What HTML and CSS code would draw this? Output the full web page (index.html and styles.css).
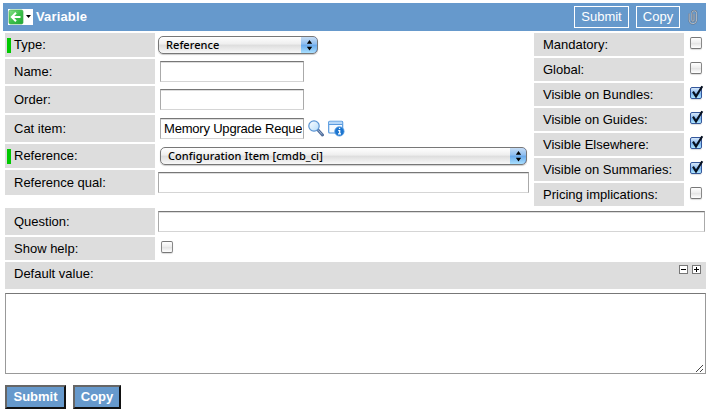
FILE: index.html
```html
<!DOCTYPE html>
<html lang="en">
<head>
<meta charset="utf-8">
<title>Variable</title>
<link rel="stylesheet" href="styles.css">
</head>
<body>
<svg class="defs" width="0" height="0">
  <defs>
    <linearGradient id="green" x2="1" y2="1"><stop stop-color="#8be28b"/><stop offset=".5" stop-color="#3cc04a"/><stop offset="1" stop-color="#1fa832"/></linearGradient>
    <linearGradient id="lens" x2="1" y2="1"><stop stop-color="#fff"/><stop offset="1" stop-color="#b5dcfa"/></linearGradient>
    <symbol id="tick" viewBox="0 0 16 16"><path d="M4 6.6 7 11.4 13.3 1.2" fill="none" stroke="#07101f" stroke-width="2.1"/></symbol>
  </defs>
</svg>
<header class="bar">
  <span class="back">
    <svg width="25" height="16" viewBox="0 0 25 16"><rect x="1" y="1" width="14" height="14" rx="1.5" fill="url(#green)" stroke="#3fae4a" stroke-width=".7"/><path d="M12.5 8H4M8 3.8 3.8 8 8 12.2" fill="none" stroke="#fff" stroke-width="2"/><path d="M18 6h5l-2.5 3z" fill="#000"/></svg>
  </span>
  <h1>Variable</h1>
  <button class="top submit">Submit</button>
  <button class="top copy">Copy</button>
  <svg class="clip" width="10" height="15" viewBox="0 0 10 15"><path d="M1.2 3.5v6.5a3.7 3.7 0 0 0 7.4 0V3.2a2.4 2.4 0 0 0-4.8 0v7a1 1 0 0 0 2.2 0V4" fill="none" stroke="#56677c" stroke-width="1.6"/><path d="M1.2 3.5v6.5a3.7 3.7 0 0 0 7.4 0V3.2a2.4 2.4 0 0 0-4.8 0v7a1 1 0 0 0 2.2 0V4" fill="none" stroke="#dce2e8" stroke-width=".7"/></svg>
</header>
<main>
  <div class="columns">
    <section class="fields">
      <div class="row h24"><label class="label required">Type:</label><div class="select short"><span>Reference</span><i><svg width="17" height="16" viewBox="0 0 17 16"><path d="M5.8 6.8h5.4L8.5 3zM5.8 9.7h5.4L8.5 13.5z"/></svg></i></div></div>
      <div class="row h25"><label class="label">Name:</label><div class="input small"></div></div>
      <div class="row h27"><label class="label">Order:</label><div class="input small"></div></div>
      <div class="row h27"><label class="label">Cat item:</label><div class="input small"><span>Memory Upgrade Reque</span></div>
        <svg class="lookup" width="16" height="17" viewBox="0 0 16 17"><path d="m10 10 4.5 5" stroke="#526f9c" stroke-width="3" stroke-linecap="round"/><path d="m10.4 10.4 3.6 4" stroke="#a4b9d8" stroke-width="1"/><circle cx="6" cy="6" r="5.2" fill="url(#lens)" stroke="#5b94d3" stroke-width="1.2"/></svg>
        <svg class="info" width="17" height="17" viewBox="0 0 17 17"><rect x=".7" y="1.2" width="14" height="11.8" rx="1" fill="#f5faff" stroke="#4a92dc" stroke-width="1.1"/><path d="M1.2 1.7h13v2.5h-13z" fill="#b6d7f8"/><path d="M1 4.5h13.5" stroke="#5a9ade"/><circle cx="11.4" cy="11.4" r="4.7" fill="#1c75cf" stroke="#5ba0e5" stroke-width=".8"/><path d="M10.2 10.6h1.5v3M10 13.9h3M10.9 8.4h1.3" fill="none" stroke="#fff" stroke-width="1.3"/></svg>
      </div>
      <div class="row h24"><label class="label required">Reference:</label><div class="select long"><span>Configuration Item [cmdb_ci]</span><i><svg width="17" height="16" viewBox="0 0 17 16"><path d="M5.8 6.8h5.4L8.5 3zM5.8 9.7h5.4L8.5 13.5z"/></svg></i></div></div>
      <div class="row h25"><label class="label">Reference qual:</label><div class="input medium"></div></div>
    </section>
    <section class="options">
      <div class="option"><label class="label">Mandatory:</label><span class="check"></span></div>
      <div class="option"><label class="label">Global:</label><span class="check"></span></div>
      <div class="option"><label class="label">Visible on Bundles:</label><span class="check on"><svg><use href="#tick"/></svg></span></div>
      <div class="option"><label class="label">Visible on Guides:</label><span class="check on"><svg><use href="#tick"/></svg></span></div>
      <div class="option"><label class="label">Visible Elsewhere:</label><span class="check on"><svg><use href="#tick"/></svg></span></div>
      <div class="option"><label class="label">Visible on Summaries:</label><span class="check on"><svg><use href="#tick"/></svg></span></div>
      <div class="option"><label class="label">Pricing implications:</label><span class="check"></span></div>
    </section>
  </div>
  <section class="fields lower">
    <div class="row h27"><label class="label">Question:</label><div class="input wide"></div></div>
    <div class="row h23"><label class="label">Show help:</label><span class="check help"></span></div>
    <div class="default"><label>Default value:</label>
      <svg width="22" height="9" viewBox="0 0 22 9" shape-rendering="crispEdges"><path d="M.5.5h8v8h-8zM13.5.5h8v8h-8z" fill="#fff" stroke="#777"/><path d="M2 4.5h5M15 4.5h5M17.5 2v5" stroke="#000"/></svg>
    </div>
  </section>
  <div class="area"><svg width="8" height="8" viewBox="0 0 8 8" shape-rendering="crispEdges"><path d="M0 7h1v1H0zM1 6h1v1H1zM2 5h1v1H2zM3 4h1v1H3zM4 3h1v1H4zM5 2h1v1H5zM6 1h1v1H6zM4 7h1v1H4zM5 6h1v1H5zM6 5h1v1H6z" fill="#444"/></svg></div>
  <div class="actions"><button class="submit">Submit</button><button class="copy">Copy</button></div>
</main>
</body>
</html>
```
FILE: styles.css
```css
* { box-sizing: border-box; }
body { margin: 0; padding: 3px 9px 0 3px; background: #fff; color: #000; font: 13px/16px "Liberation Sans", Arial, sans-serif; }
svg { display: block; flex: none; }
.defs { position: absolute; }
button { padding: 0; border-radius: 0; font: inherit; }
.bar { display: flex; align-items: center; width: 703px; height: 28px; padding: 0 8px 0 5px; background: #69c; color: #fff; }
.back { width: 25px; height: 16px; background: #fff; }
.bar h1 { flex: 1; margin: 0 0 0 3px; font-size: 13px; line-height: 16px; letter-spacing: .15px; }
.top { height: 22px; border: 1px solid #fff; background: #69c; color: #fff; font-size: 13px; line-height: 18px; }
.top.submit { width: 55px; margin-right: 7px; }
.top.copy { width: 44px; margin-right: 8px; }
main { padding: 2px 0 0 2px; }
.columns { display: flex; justify-content: space-between; height: 173px; width: 700px; }
.fields { display: flex; flex-direction: column; gap: 2px; }
.row { display: flex; align-items: center; }
.h23 { height: 23px; }
.h24 { height: 24px; }
.h25 { height: 25px; }
.h27 { height: 27px; }
.label { display: flex; align-items: center; flex: none; width: 150px; height: 100%; padding-left: 9px; background: #ddd; white-space: nowrap; }
.required { padding-left: 2px; }
.required::before { content: ""; width: 4px; height: 15px; margin-right: 3px; background: #00c800; }
.input { height: 21px; margin-left: 5px; border: 1px solid #aaa; border-top-color: #777; border-bottom-color: #d5d5d5; box-shadow: inset 0 1px #ddd; background: #fff; white-space: nowrap; }
.small { width: 144px; padding: 2px 1px 0 3px; }
.small span { display: block; overflow: hidden; letter-spacing: -.2px; }
.medium { width: 371px; margin-left: 3px; }
.wide { width: 547px; margin-left: 3px; }
.select { display: flex; justify-content: space-between; height: 18px; border: 1px solid #777; border-radius: 5px; overflow: hidden; background: linear-gradient(#fff, #eee 45%, #ddd 50%, #f8f8f8); box-shadow: 0 1px 1px #ccc; font: 500 11px/16px "Noto Sans", sans-serif; letter-spacing: .06px; white-space: nowrap; }
.select span { padding-left: 7px; }
.select i { width: 17px; margin: -1px -1px 0 0; border-top: 1px solid #2948a0; border-right: 1px solid #3557a5; border-radius: 0 5px 5px 0; background: linear-gradient(#c6ddf5, #8dbdef 45%, #68a8ea 50%, #a9e0ff); }
.short { width: 160px; margin-left: 3px; }
.long { width: 367px; margin-left: 5px; }
.lookup { margin-left: 4px; }
.info { margin-left: 4px; }
.options { display: flex; flex-direction: column; gap: 2px; width: 171px; }
.option { display: flex; height: 23px; }
.check { display: block; width: 12px; height: 12px; margin: 4px 0 0 6px; border: 1px solid #888; border-color: #777 #888 #777; border-radius: 2px; background: linear-gradient(#fff, #eee 45%, #e2e2e2 50%, #fff); box-shadow: 0 1px 1px #ddd; }
.check.on { border-color: #34579b; background: linear-gradient(#d5e7fa, #8fbdf0 50%, #73b1ef 50%, #b0e6ff); }
.check svg { width: 16px; height: 16px; margin: -3px 0 0 -2px; overflow: visible; }
.lower { margin-top: 2px; width: 701px; }
.help { margin: 0 0 3px 6px; }
.default { display: flex; justify-content: space-between; height: 27px; padding: 4px 5px 0 9px; background: #ddd; }
.default svg { margin-top: -1px; }
.area { display: flex; justify-content: flex-end; align-items: flex-end; width: 701px; height: 81px; margin-top: 4px; padding: 0 1px 1px 0; border: 1px solid #999; border-top-color: #777; }
.actions { display: flex; gap: 7px; margin-top: 11px; }
.actions button { height: 24px; border: 2px solid; border-color: #666 #111 #111 #666; background: #69c; color: #fff; font-size: 13px; font-weight: 700; line-height: 18px; }
.actions .submit { width: 61px; }
.actions .copy { width: 48px; }
```
